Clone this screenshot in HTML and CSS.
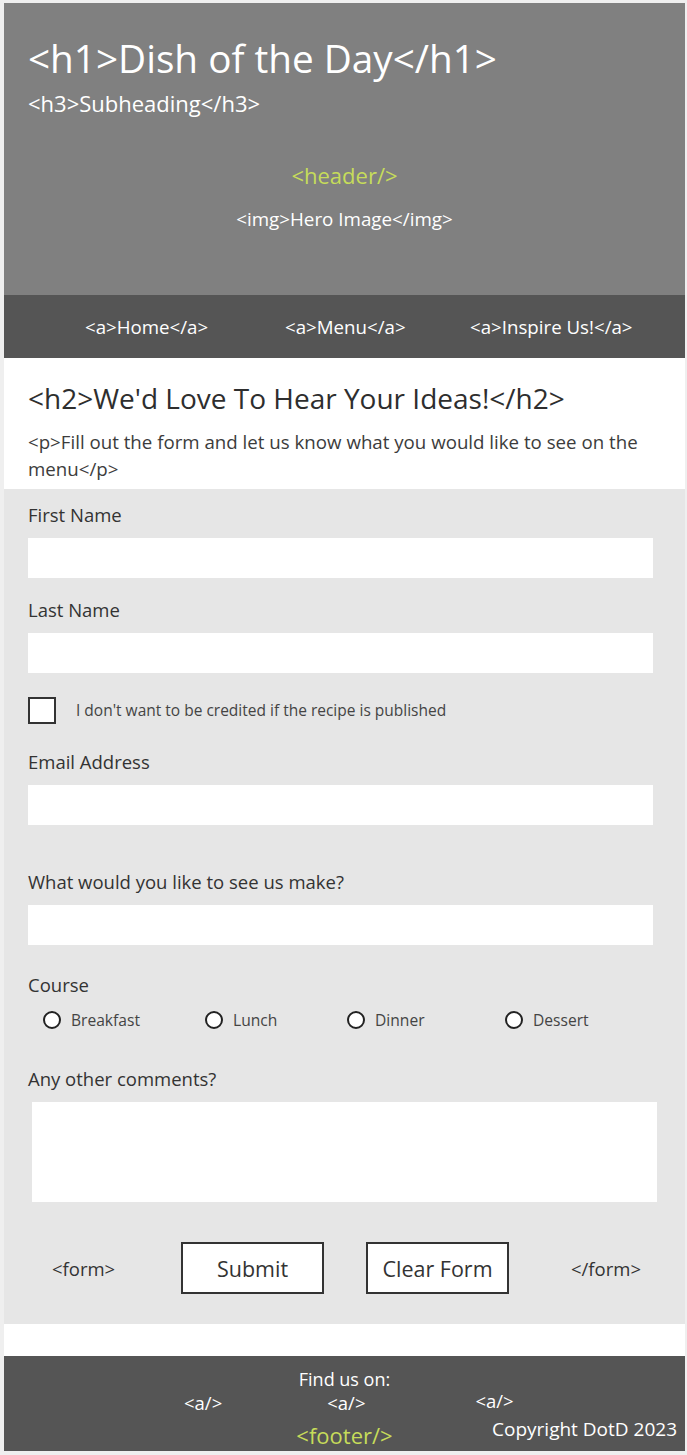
FILE: index.html
```html
<!DOCTYPE html>
<html lang="en">
<head>
<meta charset="utf-8">
<title>Dish of the Day</title>
<link rel="stylesheet" href="styles.css">
</head>
<body>
<div class="page">
  <header class="hero">
    <h1 class="hero-title">&lt;h1&gt;Dish of the Day&lt;/h1&gt;</h1>
    <h3 class="hero-sub">&lt;h3&gt;Subheading&lt;/h3&gt;</h3>
    <p class="hero-tag">&lt;header/&gt;</p>
    <p class="hero-img">&lt;img&gt;Hero Image&lt;/img&gt;</p>
  </header>
  <nav class="nav">
    <a class="nav-link" href="#">&lt;a&gt;Home&lt;/a&gt;</a>
    <a class="nav-link" href="#">&lt;a&gt;Menu&lt;/a&gt;</a>
    <a class="nav-link" href="#">&lt;a&gt;Inspire Us!&lt;/a&gt;</a>
  </nav>
  <section class="intro">
    <h2 class="intro-title">&lt;h2&gt;We'd Love To Hear Your Ideas!&lt;/h2&gt;</h2>
    <p class="intro-text">&lt;p&gt;Fill out the form and let us know what you would like to see on the menu&lt;/p&gt;</p>
  </section>
  <form class="form">
    <label class="label label-first" for="fn">First Name</label>
    <input class="text-input" id="fn" type="text">
    <label class="label label-gap20" for="ln">Last Name</label>
    <input class="text-input" id="ln" type="text">
    <div class="check-row">
      <input class="checkbox" id="cr" type="checkbox">
      <label class="check-label" for="cr">I don't want to be credited if the recipe is published</label>
    </div>
    <label class="label label-gap26" for="em">Email Address</label>
    <input class="text-input" id="em" type="email">
    <label class="label label-gap45" for="mk">What would you like to see us make?</label>
    <input class="text-input" id="mk" type="text">
    <p class="label label-gap28">Course</p>
    <div class="radio-row">
      <label class="radio-item"><input class="radio" type="radio" name="course"><span>Breakfast</span></label>
      <label class="radio-item"><input class="radio" type="radio" name="course"><span>Lunch</span></label>
      <label class="radio-item"><input class="radio" type="radio" name="course"><span>Dinner</span></label>
      <label class="radio-item"><input class="radio" type="radio" name="course"><span>Dessert</span></label>
    </div>
    <label class="label label-gap37" for="cm">Any other comments?</label>
    <textarea class="comments" id="cm"></textarea>
    <div class="actions">
      <span class="form-tag form-tag-open">&lt;form&gt;</span>
      <button class="btn" type="submit">Submit</button>
      <button class="btn" type="reset">Clear Form</button>
      <span class="form-tag">&lt;/form&gt;</span>
    </div>
  </form>
  <div class="spacer"></div>
  <footer class="footer">
    <p class="footer-title">Find us on:</p>
    <div class="footer-links">
      <a class="footer-link footer-link-low" href="#">&lt;a/&gt;</a>
      <a class="footer-link footer-link-low" href="#">&lt;a/&gt;</a>
      <a class="footer-link" href="#">&lt;a/&gt;</a>
    </div>
    <div class="footer-bottom">
      <span class="footer-tag">&lt;footer/&gt;</span>
      <span class="copyright">Copyright DotD 2023</span>
    </div>
  </footer>
</div>
</body>
</html>
```

FILE: styles.css
```css
* { box-sizing: border-box; }

html, body {
  margin: 0;
  padding: 0;
}

body {
  background: #efefef;
  font-family: "Open Sans", "Noto Sans", sans-serif;
  color: #333;
  height: 1455px;
}

.page {
  width: 681px;
  margin: 3px 0 0 4px;
  background: #ffffff;
}

/* Header */
.hero {
  height: 292px;
  background: #808080;
  padding: 32px 24px 0 24px;
  display: flex;
  flex-direction: column;
  color: #ffffff;
}

.hero-title {
  margin: 0;
  font-size: 38.7px;
  line-height: 47px;
  font-weight: 400;
}

.hero-sub {
  margin: 7px 0 0;
  font-size: 22px;
  line-height: 28px;
  font-weight: 400;
}

.hero-tag {
  margin: 44px 0 0;
  font-size: 22px;
  line-height: 28px;
  color: #c6dc5a;
  text-align: center;
}

.hero-img {
  margin: 17px 0 0;
  font-size: 18.8px;
  line-height: 26px;
  text-align: center;
}

/* Nav */
.nav {
  height: 63px;
  background: #555555;
  display: grid;
  grid-template-columns: 200px 185px auto;
  align-items: center;
  padding-left: 81px;
}

.nav-link {
  color: #ffffff;
  text-decoration: none;
  font-size: 18.7px;
  line-height: 26px;
}

/* Intro */
.intro {
  height: 131px;
  padding: 22px 32px 0 24px;
}

.intro-title {
  margin: 0;
  font-size: 28px;
  line-height: 36px;
  font-weight: 400;
  color: #2e2e2e;
}

.intro-text {
  margin: 12px 0 0;
  font-size: 18.7px;
  line-height: 27px;
  color: #3c3c3c;
}

/* Form */
.form {
  height: 835px;
  background: #e6e6e6;
  padding: 0 32px 0 24px;
  display: flex;
  flex-direction: column;
}

.label {
  display: block;
  margin: 0;
  font-size: 18.5px;
  line-height: 24px;
  color: #333;
}

.label-first { margin-top: 13.5px; }
.label-gap20 { margin-top: 20px; }
.label-gap26 { margin-top: 26px; }
.label-gap45 { margin-top: 45px; }
.label-gap28 { margin-top: 28px; }
.label-gap37 { margin-top: 37px; }

.text-input {
  display: block;
  width: 100%;
  height: 40px;
  margin: 11px 0 0;
  border: none;
  background: #ffffff;
  font: inherit;
}

.check-row {
  display: flex;
  align-items: center;
  gap: 20px;
  height: 27px;
  margin-top: 24px;
}

.checkbox {
  appearance: none;
  -webkit-appearance: none;
  margin: 0;
  width: 28px;
  height: 27px;
  border: 2px solid #333;
  background: #ffffff;
}

.check-label {
  font-size: 15.5px;
  color: #444;
}

.radio-row {
  display: grid;
  grid-template-columns: 162px 142px 158px auto;
  height: 21px;
  margin-top: 12px;
  padding-left: 15px;
  align-items: center;
}

.radio-item {
  display: flex;
  align-items: center;
  gap: 10px;
  font-size: 15.6px;
  color: #444;
}

.radio {
  appearance: none;
  -webkit-appearance: none;
  margin: 0;
  width: 18px;
  height: 18px;
  border: 2px solid #222;
  border-radius: 50%;
  background: #ffffff;
}

.comments {
  display: block;
  width: 625px;
  height: 100px;
  margin: 11.5px 0 0 4px;
  border: none;
  background: #ffffff;
  resize: none;
  font: inherit;
}

.actions {
  display: grid;
  grid-template-columns: 153px 185px 205px auto;
  align-items: center;
  margin-top: 40px;
  height: 52px;
}

.form-tag {
  font-size: 18.5px;
  color: #333;
}

.form-tag-open { padding-left: 24px; }

.btn {
  width: 143px;
  height: 52px;
  border: 2px solid #333;
  background: #ffffff;
  font-family: "Open Sans", "Noto Sans", sans-serif;
  font-size: 21.5px;
  color: #333;
  padding: 0;
}

/* Spacer */
.spacer {
  height: 32px;
  background: #ffffff;
}

/* Footer */
.footer {
  height: 95px;
  background: #555555;
  color: #ffffff;
  padding-top: 11.5px;
  display: flex;
  flex-direction: column;
}

.footer-title {
  margin: 0;
  text-align: center;
  font-size: 18px;
  line-height: 22px;
}

.footer-links {
  display: flex;
  align-items: flex-start;
  margin-top: 0;
  padding-left: 180px;
  gap: 105px;
}

.footer-link {
  color: #ffffff;
  text-decoration: none;
  font-size: 18.5px;
  line-height: 22px;
}

.footer-link-low { margin-top: 2px; }
.footer-link + .footer-link + .footer-link { margin-left: 5px; }

.footer-bottom {
  display: grid;
  grid-template-columns: 1fr auto 1fr;
  align-items: start;
  padding: 0 8px;
}

.footer-tag {
  grid-column: 2;
  margin-top: 8px;
  font-size: 22px;
  line-height: 26px;
  color: #c6dc5a;
}

.copyright {
  grid-column: 3;
  justify-self: end;
  margin-top: 3px;
  font-size: 19px;
  line-height: 24px;
}
```
